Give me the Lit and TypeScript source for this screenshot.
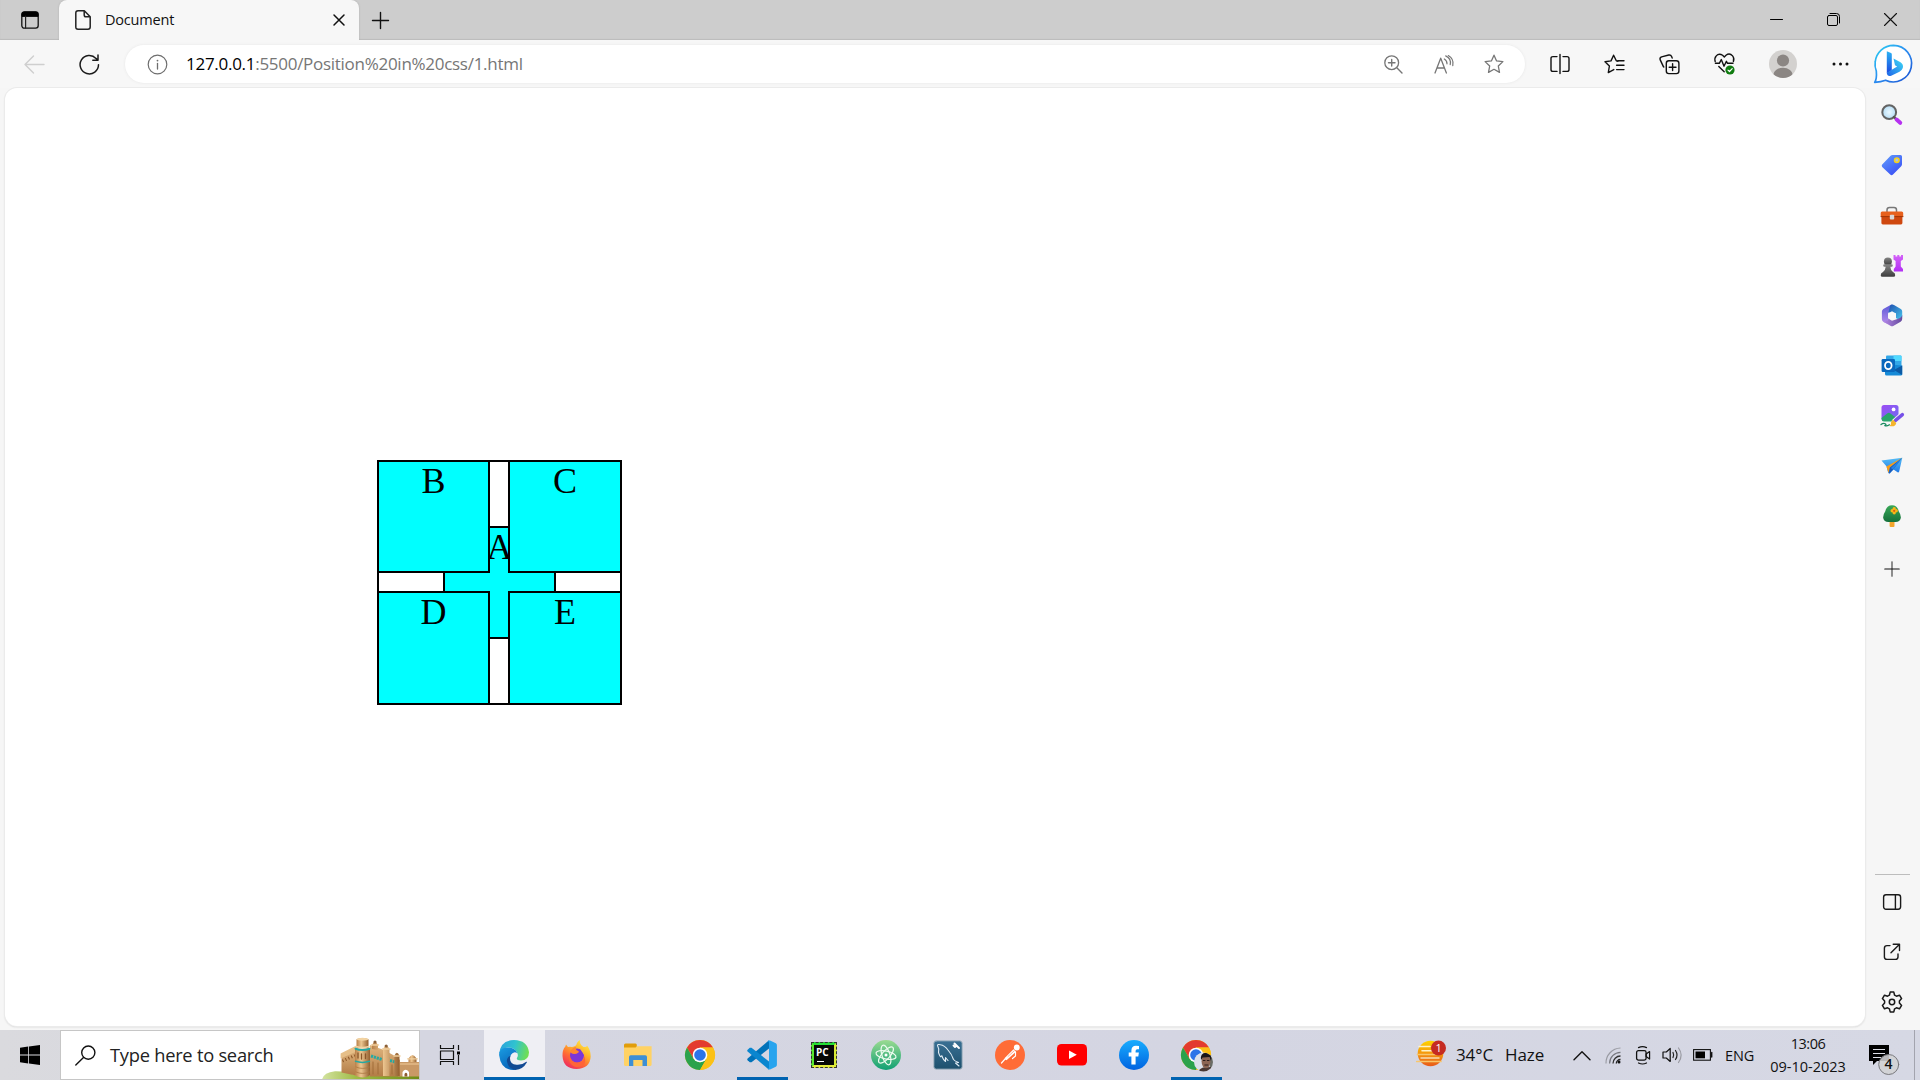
import { LitElement, html, svg, css } from "lit";
import { customElement } from "lit/decorators.js";

const box = (w: number, h: number, body: unknown, vb = `0 0 ${w} ${h}`) =>
  html`<svg width=${w} height=${h} viewBox=${vb} fill="none" stroke-linecap="round" stroke-linejoin="round">${body}</svg>`;

const STAR = "M10 1.2 12.6 6.9 18.9 7.6 14.3 12 15.5 18.4 10 15.3 4.5 18.4 5.7 12 1.1 7.6 7.4 6.9Z";

/* ---------- browser chrome ---------- */
const tabActions = box(18, 18, svg`<rect x=".8" y=".8" width="16.4" height="16.4" rx="2.6" stroke="#111" stroke-width="1.3"/><path d="M1 5V3.2Q1 1 3.2 1H14.8Q17 1 17 3.2V5Z" fill="#000" stroke="#000"/><path d="M4.6 5V17" stroke="#222" stroke-width="1.2"/>`);
const fileIcon = box(16, 20, svg`<path d="M3 .8H9.3L15.2 6.7V17Q15.2 19.2 13 19.2H3Q.8 19.2 .8 17V3Q.8 .8 3 .8ZM9.2 1V5Q9.2 6.8 11 6.8H15" stroke="#222" stroke-width="1.5"/>`);
const tabClose = box(12, 12, svg`<path d="M1 1 11 11M11 1 1 11" stroke="#111" stroke-width="1.5"/>`);
const newTab = box(17, 17, svg`<path d="M8.5.5V16.5M.5 8.5H16.5" stroke="#111" stroke-width="1.4"/>`);
const minIcon = box(13, 13, svg`<path d="M.5 6.5H12.5" stroke="#000" stroke-width="1"/>`);
const maxIcon = box(13, 13, svg`<rect x=".5" y="2.5" width="10" height="10" rx="1.5" stroke="#000"/><path d="M3 .5H9.5Q12.5.5 12.5 3.5V10" stroke="#000"/>`);
const closeIcon = box(13, 13, svg`<path d="M.5.5 12.5 12.5M12.5.5.5 12.5" stroke="#111" stroke-width="1.1"/>`);

const backIcon = box(21, 19, svg`<path d="M20 9.5H1M9.5 1 1 9.5 9.5 18" stroke="#cfcfcf" stroke-width="1.4"/>`);
const reloadIcon = box(21, 21, svg`<path d="M19.5 10.8A9.2 9.2 0 1 1 17 4.4L18.8 6M19 1V6.2H13.8" stroke="#1b1b1b" stroke-width="1.5"/>`);
const infoIcon = box(21, 21, svg`<circle cx="10.5" cy="10.5" r="9.3" stroke="#6e6e6e" stroke-width="1.2"/><path d="M10.5 9.5V15" stroke="#6e6e6e" stroke-width="1.3"/><circle cx="10.5" cy="6.6" r=".9" fill="#6e6e6e"/>`);
const zoomIcon = box(19, 19, svg`<circle cx="7.7" cy="7.7" r="6.9" stroke="#767676" stroke-width="1.3"/><path d="M7.7 4.5V11M4.5 7.7H11M12.8 12.8 18 18" stroke="#767676" stroke-width="1.4"/>`);
const readIcon = box(20, 19, svg`<path d="M1 18 6.7 3.2 12.4 18M3 13H10.4" stroke="#767676" stroke-width="1.3"/><path d="M10.3 4Q13 5.5 13 8.8M11.7.9Q17.5 3.5 16.2 9.6M14.3.6Q20.2 4 18.8 10.6" stroke="#767676" stroke-width="1.2"/>`);
const starIcon = box(20, 20, svg`<path d=${STAR} stroke="#767676" stroke-width="1.3"/>`);
const splitIcon = box(20, 20, svg`<path d="M7 2.6H3Q1 2.6 1 4.6V15.4Q1 17.4 3 17.4H7M13 2.6H17Q19 2.6 19 4.6V15.4Q19 17.4 17 17.4H13M10 .5V19.5" stroke="#111" stroke-width="1.4"/>`);
const favIcon = box(21, 20, svg`<path d="M14 7.2 12.3 6.8 9.6 1.2 7 6.9 1 7.7 5.4 12 4.3 18.6 9.8 15.6M14 6.8H20M12.6 11.2H20M12.6 15.6H20" stroke="#111" stroke-width="1.4"/>`);
const collectIcon = box(21, 21, svg`<rect x="7.3" y="6.8" width="12.6" height="12.8" rx="2.6" stroke="#111" stroke-width="1.4"/><path d="M13.6 9.8V16.6M10.2 13.2H17M4.4 12.6 1.1 5.6Q.6 3.6 2.6 2.9L9.8 1Q11.8.6 12.6 2.5L13.2 4M4.4 12.6 4.8 13" stroke="#111" stroke-width="1.4"/>`);
const heartIcon = box(21, 22, svg`<path d="M1.2 8.5Q.2 5 2.2 2.9Q5-.2 8.6 2.3L10.3 4 12 2.3Q15.6-.4 18.6 2.9Q20.6 5.2 19.4 8.5M1.4 10.3H5.3L7.3 6.6 10 13.2 12.4 8.3 13.5 10.3H19M4.8 13.4 10.2 18.8" stroke="#111" stroke-width="1.4"/><circle cx="16" cy="17" r="4.6" fill="#107c10"/><path d="M14 17.1 15.5 18.5 18.2 15.7" stroke="#fff" stroke-width="1.2"/>`);
const avatarIcon = box(28, 28, svg`<defs><clipPath id="av"><circle cx="14" cy="14" r="14"/></clipPath></defs><g clip-path="url(#av)"><rect width="28" height="28" fill="#d3d1cf"/><circle cx="14" cy="10.5" r="6.1" fill="#8b8683"/><ellipse cx="14" cy="25" rx="9.8" ry="7.2" fill="#8b8683"/></g>`);
const dotsIcon = box(17, 4, svg`<circle cx="2" cy="2" r="1.5" fill="#111"/><circle cx="8.5" cy="2" r="1.5" fill="#111"/><circle cx="15" cy="2" r="1.5" fill="#111"/>`);
const bingIcon = box(40, 40, svg`<defs><linearGradient id="bo" x1="0" y1="0" x2="1" y2="1"><stop offset="0" stop-color="#2bd0f2"/><stop offset=".5" stop-color="#2b8cf0"/><stop offset="1" stop-color="#1a4fd0"/></linearGradient><linearGradient id="bb" x1="0" y1="0" x2="0" y2="1"><stop offset="0" stop-color="#2bb4f4"/><stop offset="1" stop-color="#1a48e0"/></linearGradient><linearGradient id="bc" x1="0" y1="1" x2="1" y2="0"><stop offset="0" stop-color="#1d63e8"/><stop offset="1" stop-color="#3fdcf6"/></linearGradient></defs>
<path d="M20.5 1.3A18.3 18.3 0 1 1 12.6 36.2Q8 37.8 1.7 38.4Q4 35 3.3 27Q1.5 22.5 2.2 18A18.4 18.4 0 0 1 20.5 1.3Z" fill="#fff" stroke="url(#bo)" stroke-width="1.7"/>
<path d="M13.8 7.2 18 9Q18.8 9.4 18.8 10.4V26.2L13.8 29.3Z" fill="url(#bb)"/><path d="M20.5 14.5 27.5 18.2Q30.8 20.3 29.8 24Q29 26.3 26.5 27.7L18.2 31.8Q14.2 33 13.8 28.8L24.2 22.6 22 21.2Z" fill="url(#bc)"/>`);

/* ---------- sidebar ---------- */
const sSearch = box(22, 22, svg`<defs><radialGradient id="lens"><stop offset="0" stop-color="#eaf8ff"/><stop offset="1" stop-color="#b5ddf5"/></radialGradient></defs><circle cx="8.2" cy="8.2" r="6.9" fill="url(#lens)" stroke="#636363" stroke-width="2"/><path d="M13 13 15 15" stroke="#555" stroke-width="2.4"/><path d="M15.6 15.6 19.2 18.8" stroke="#b631f0" stroke-width="4"/>`);
const sTag = box(22, 22, svg`<defs><linearGradient id="tg" x1="0" y1="0" x2=".7" y2="1"><stop offset="0" stop-color="#62a0fb"/><stop offset="1" stop-color="#3a4ff5"/></linearGradient></defs><path d="M11.5 1H19.5Q21 1 21 2.5V10.3Q21 11.5 20.2 12.3L12 20.6Q10.5 21.8 9.2 20.6L1.2 13Q.2 11.7 1.2 10.5L9.6 1.8Q10.4 1 11.5 1Z" fill="url(#tg)"/><circle cx="15.8" cy="6.2" r="2.2" fill="#aac4ea" stroke="#f7d21c" stroke-width="1.7"/>`);
const sBag = box(24, 20, svg`<path d="M7 6V4Q7 1.5 9.5 1.5H14Q16.5 1.5 16.5 4V6" stroke="#777" stroke-width="1.5"/><rect x="1.4" y="6" width="21" height="12.4" rx="1.4" fill="#cf480f"/><path d="M.7 7Q.7 5.5 2.2 5.5H21.6Q23.2 5.5 23.2 7V10.3H.7Z" fill="#e7601c"/><path d="M1 10.6H23" stroke="#a23406"/><rect x="9.8" y="8.7" width="4.4" height="4.8" rx="1" fill="#d8d8d8"/>`);
const sChess = box(24, 24, svg`<defs><linearGradient id="rk" x1="0" y1="0" x2="0" y2="1"><stop offset="0" stop-color="#d463f8"/><stop offset="1" stop-color="#b22ff4"/></linearGradient><linearGradient id="pn" x1="0" y1="0" x2="0" y2="1"><stop offset="0" stop-color="#858585"/><stop offset="1" stop-color="#3d3d3d"/></linearGradient></defs><path d="M13.5 1H15.5V2.5H17.3V1H19.3V2.5H21V1H23V5.5L20.8 7V12.5L23 15V17.5H13.8V15L15.6 12.5V7L13.5 5.5Z" fill="url(#rk)"/><circle cx="7.9" cy="7.4" r="4" fill="url(#pn)"/><path d="M3.2 11.5Q3.2 10.3 4.4 10.3H11.6Q12.8 10.3 12.8 11.5T11.4 12.7H10.3Q10.5 16 13 18Q15.4 19 15.2 21.2Q15.2 22.8 13.5 22.8H2.4Q.8 22.8.7 21.2Q.6 19 3 18Q5.4 16 5.7 12.7H4.6Q3.2 12.7 3.2 11.5Z" fill="url(#pn)"/>`);
const s365 = box(22, 23, svg`<defs><linearGradient id="m1" x1="0" y1="0" x2="0" y2="1"><stop offset="0" stop-color="#5b59d8"/><stop offset="1" stop-color="#b48bea"/></linearGradient><linearGradient id="m2" x1="0" y1="0" x2="1" y2="1"><stop offset="0" stop-color="#1d4fae"/><stop offset="1" stop-color="#48c8ee"/></linearGradient><linearGradient id="m3" x1="0" y1="0" x2="1" y2="0"><stop offset="0" stop-color="#b487e6"/><stop offset="1" stop-color="#654a9e"/></linearGradient></defs><path d="M10 .8 2.3 5Q.9 6 .9 7.6V15.2Q.9 17 2.5 17.9L5.8 19.6 7.4 14V8.6L12.6 5.4 12.8 2.1Q12 .2 10 .8Z" fill="url(#m1)"/><path d="M10 .8Q11.4.1 13 .9L19.8 4.9Q21.2 5.8 21.2 7.6V13.2L19.2 16.3 14.8 13.9V9.2L7.4 8.4 9.3 1.6Z" fill="url(#m2)"/><path d="M2.4 17.7 9.8 22Q11 22.6 12.2 22L19.6 17.8Q21.2 16.8 21.2 15V10.8Q20.7 13.7 17.2 14.8L11 16.8 7.4 14.6Q7 17.4 2.4 17.7Z" fill="url(#m3)"/><path d="M11 7.3 15 9.6V13.8L11 16.200 7 13.800V9.600Z" fill="#f8f8f8"/>`);
const sOutlook = box(22, 21, svg`<rect x="5" y=".5" width="15.5" height="12" rx="1" fill="#33a7e8"/><path d="M12.5.5H19.5Q20.5.5 20.5 1.5V6H12.5Z" fill="#50d9ff"/><path d="M4 9 21.2 10.5V19Q21.2 20.5 19.7 20.5H5.5Q4 20.5 4 19Z" fill="#168ad7"/><path d="M21.2 10.5V20L13 15Z" fill="#0c5aa5"/><rect x=".6" y="4" width="13.4" height="13" rx="1.2" fill="#0a68bd"/><ellipse cx="7.3" cy="10.5" rx="3.3" ry="3.6" stroke="#fff" stroke-width="1.8"/>`);
const sImage = box(25, 24, svg`<defs><linearGradient id="im" x1="0" y1="0" x2="1" y2="1"><stop offset="0" stop-color="#9c4df4"/><stop offset="1" stop-color="#6e6cf0"/></linearGradient></defs><rect x="1.5" y="1" width="17" height="16" rx="2.5" fill="url(#im)"/><circle cx="13.6" cy="5.4" r="1.9" fill="#fff"/><path d="M1.5 14 7.5 9.2Q9 8.3 10.4 9.4L18.5 15.5Q18 17.6 16 17.6H4Q1.5 17.3 1.5 14.5Z" fill="#28a56c"/><path d="M22.5 10.6 14.6 17.3" stroke="#f5f5f5" stroke-width="5.5"/><path d="M22.4 10.6 15.5 16.4" stroke="#7650e8" stroke-width="3.4"/><path d="M13.2 15.8 16.2 18.9Q15.5 23.5 9.2 22Q11.8 20.5 11 18.5Q11.4 16.2 13.2 15.8Z" fill="#f5b52c"/><path d="M1 20.5Q3.5 18.6 5.2 19.7T4.8 21.6Q7 22.4 9.4 20.8" stroke="#1a8a60" stroke-width="1.3"/>`);
const sPlane = box(22, 18, svg`<defs><linearGradient id="pl" x1="0" y1="0" x2="0" y2="1"><stop offset="0" stop-color="#55bdf6"/><stop offset="1" stop-color="#1d75e4"/></linearGradient></defs><path d="M.5 3.5 21.3.7 18.2 14.6Q17.8 15.8 16.6 15.2L12.5 12.6 9 16.3Q7.8 17 7.2 15.8L5.6 9.5Z" fill="url(#pl)"/><path d="M21.3.7 5.4 9.4 7.5 16 8.9 10.4Z" fill="#f79c16"/><path d="M20.8 1 8.9 10.4 8 16.7 12.2 12.6Z" fill="#1a5bb8"/><path d="M21.3.8 12 12.5 9.8 10.9Z" fill="#2682e6"/>`);
const sTree = box(20, 24, svg`<defs><linearGradient id="tr" x1="0" y1="0" x2="0" y2="1"><stop offset="0" stop-color="#39a957"/><stop offset="1" stop-color="#15703b"/></linearGradient></defs><rect x="7.6" y="15" width="4.9" height="8" rx="1" fill="#f3a52c"/><path d="M10 1.2Q15.5 1.2 16.7 7.3Q19.2 11 18.8 14Q18 18 13.5 18H6.4Q2 18 1.2 14Q.8 11 3.3 7.3Q4.6 1.2 10 1.2Z" fill="url(#tr)"/><g fill="#f9b618"><circle cx="12.2" cy="4.8" r="1.7"/><circle cx="12.2" cy="8.8" r="1.7"/><circle cx="10.2" cy="6.8" r="1.7"/><circle cx="14.2" cy="6.8" r="1.7"/></g><circle cx="12.2" cy="6.8" r="1.1" fill="#dc5b12"/>`);
const sPlus = box(16, 16, svg`<path d="M8 .8V15.2" stroke="#555" stroke-width="1.3"/><path d="M.8 8H15.2" stroke="#111" stroke-width="1.2"/>`);
const sPanel = box(20, 18, svg`<rect x="1.6" y="1.8" width="17" height="14.4" rx="2.4" stroke="#1a1a1a" stroke-width="1.4"/><path d="M13.4 2V16" stroke="#1a1a1a" stroke-width="1.4"/>`);
const sOpen = box(18, 18, svg`<path d="M7 2.6H4Q1.4 2.6 1.4 5.2V14Q1.4 16.4 4 16.4H12.4Q15 16.4 15 14V11M10.2 1.3H16.5V7.6M16.3 1.5 8 9.8" stroke="#1a1a1a" stroke-width="1.4"/>`);
const sGear = box(22, 22, svg`<circle cx="11" cy="11" r="2.7" stroke="#1a1a1a" stroke-width="1.5"/><path d="M9.2 1.1H12.8L13.6 4.2 15.4 5.2 18.5 4.2 20.6 7.6 18.4 10V12L20.6 14.4 18.5 17.8 15.4 16.8 13.6 17.8 12.8 20.9H9.2L8.4 17.8 6.6 16.8 3.5 17.8 1.4 14.4 3.6 12V10L1.4 7.6 3.5 4.2 6.6 5.2 8.4 4.2Z" stroke="#1a1a1a" stroke-width="1.5"/>`);

/* ---------- taskbar ---------- */
const winLogo = box(20, 20, svg`<path d="M0 2.8 8.2 1.6V9.6H0ZM9 1.5 20 0V9.6H9ZM0 10.4H8.2V18.5L0 17.3ZM9 10.4H20V20L9 18.6Z" fill="#000"/>`);
const tSearch = box(21, 21, svg`<circle cx="13.3" cy="7.6" r="6.6" stroke="#111" stroke-width="1.4"/><path d="M8.5 12.5.8 20" stroke="#111" stroke-width="1.4"/>`);
const castle = box(97, 43, svg`<defs><linearGradient id="ch" x1="0" y1="0" x2="1" y2="0"><stop offset="0" stop-color="#d3e3a0"/><stop offset=".35" stop-color="#9fbb45"/><stop offset="1" stop-color="#6e8c16"/></linearGradient><linearGradient id="cs" x1="0" y1="0" x2="1" y2="0"><stop offset="0" stop-color="#b98048"/><stop offset=".4" stop-color="#edc690"/><stop offset="1" stop-color="#94602f"/></linearGradient><linearGradient id="cw" x1="0" y1="0" x2="0" y2="1"><stop offset="0" stop-color="#dfb57f"/><stop offset="1" stop-color="#b37c46"/></linearGradient></defs>
<path d="M0 43Q1 35.500 13 34.200Q24 34 34 38.500L97 38.500V43Z" fill="url(#ch)"/>
<path d="M76 25H97V39.500H76Z" fill="#c99966"/><path d="M77 27H97" stroke="#e3bb88" stroke-width="1.500"/><path d="M86.500 25V21.500Q90.500 14.500 94.500 21.500V25Z" fill="url(#cs)"/><path d="M85.500 21.800H95.500" stroke="#f0cf9f" stroke-width="1.200"/>
<path d="M48 8 62 13 73 19 78 23V39.500H48Z" fill="url(#cw)"/>
<path d="M19.500 19 34 11V38.500L19.500 35.500Z" fill="url(#cw)"/><path d="M18.600 16.500 34.500 8.500V14.500L18.600 21.500Z" fill="#e6bf88"/>
<path d="M20.500 24 33 18.500" stroke="#8d5828" stroke-width="3" stroke-dasharray="1.100 2.100" stroke-linecap="butt"/>
<path d="M33 12H48V38.500Q41 42.500 33 38.500Z" fill="url(#cs)"/><path d="M34.500 2.300Q40.500-.500 46.500 2.300V11.500H34.500Z" fill="url(#cs)"/><ellipse cx="40.500" cy="2.300" rx="6" ry="1.500" fill="#f2d3a2"/><path d="M34 9.500Q40.500 11.500 47 9.500" stroke="#f2d3a2" stroke-width="1.500"/>
<path d="M33.500 11.700Q40.500 14.500 47.500 11.700" stroke="#25a9a3" stroke-width="2"/><path d="M33.500 24.300Q40.500 26.500 47.500 24.300" stroke="#25a9a3" stroke-width="1.500"/><path d="M49 19 60 22.500M68 23.500 73 25" stroke="#25a9a3" stroke-width="3" stroke-dasharray="2.200 .800" stroke-linecap="butt"/><path d="M62 12.500H67M62 21H67" stroke="#4fb0a5" stroke-width="1.100"/>
<path d="M36 16V21M39.500 17V22M43.500 17V21.500" stroke="#8a572a" stroke-width="1.300"/><path d="M34 30Q40.500 33 47.500 30M34 35Q40.500 38 47.500 35" stroke="#ac7740" stroke-width=".8"/>
<path d="M50 12V8Q53 2 56 8V13ZM61 39V12Q64 5 67.500 12V39ZM72.300 39V19Q74.800 12.500 77.500 19V39Z" fill="url(#cs)"/><path d="M60.500 12H68M72 19H78M49.500 8H56.500" stroke="#f0cd9c" stroke-width="1.500"/><circle cx="53" cy="5" r="1.600" fill="#8b6038"/><circle cx="64.200" cy="9" r="1.600" fill="#8b6038"/>
<path d="M51 25V37M56 26V37M70 28V37" stroke="#a06c39"/>
<path d="M80.500 39.500V35Q83.500 30.500 87 35V39.500Z" fill="#fff"/><path d="M82.500 39.500V37Q84 34.500 85.300 37V39.500Z" fill="#8e5b31"/>`);
const taskView = box(20, 20, svg`<path d="M.5 0V3.500H13.500V0M.5 20V16.500H13.500V20M.5 6V14.500H13.500V6ZM18.500 0V5M18.500 10V20" stroke="#111" stroke-width="1.200" stroke-linecap="butt"/><path d="M17 6.500H20V9.500H17Z" fill="#000"/>`);
const edgeIcon = box(30, 30, svg`<defs><linearGradient id="e1" x1="0" y1=".3" x2="1" y2=".5"><stop offset="0" stop-color="#2ba3dc"/><stop offset=".5" stop-color="#30c3cf"/><stop offset="1" stop-color="#70df50"/></linearGradient><linearGradient id="e2" x1="0" y1="0" x2=".5" y2="1"><stop offset="0" stop-color="#1b9de2"/><stop offset="1" stop-color="#0764b9"/></linearGradient></defs>
<path d="M.3 14Q1 .2 15 0Q28.500.3 30 12.300Q29.800 20.500 22 20.500Q17.500 20.500 17.800 18.300Q19.500 16 18.500 13.500Q16 7.500 8.800 7.600Q3.500 8 .3 14Z" fill="url(#e1)"/>
<path d="M.1 15Q0 8 8.500 7.600Q15.800 7.500 18.300 13Q14.500 10.800 12 14.800Q9.500 19 12.300 25Q14 28.700 17 29.800Q2 31.500.1 15Z" fill="url(#e2)"/>
<path d="M11.400 15.800Q9.500 24 17.500 24.800Q23 25.300 27.300 21.800Q28.200 21.500 27.800 22.600Q24 29.500 16.500 30Q9 28.500 7.800 21Q8 17 11.400 15.800Z" fill="#124a93"/>`);
const firefoxIcon = box(29, 30, svg`<defs><linearGradient id="f1" x1=".8" y1="0" x2=".2" y2="1"><stop offset="0" stop-color="#fff04a"/><stop offset=".35" stop-color="#ffb52a"/><stop offset=".65" stop-color="#ff6a35"/><stop offset="1" stop-color="#ed2464"/></linearGradient></defs><path d="M18 0Q17 4 21.500 7Q25 7 25 5.500Q28.700 10 28.700 16.500Q28 28.600 14.500 29Q1.300 28.800.5 16Q.3 10 3.300 6.600L4 4.500 6 7Q8 6.300 10 7Q14.500 6.500 15 3Q16 1 18 0Z" fill="url(#f1)"/><circle cx="15" cy="15.500" r="7" fill="#7c36d8"/><path d="M8.500 12.500Q12.500 15.500 16.500 12.500Q17.500 11 15 10.500Q13 9 14.500 6.800Q9.500 7.500 8.500 12.500Z" fill="#ff8730"/><path d="M7 13Q8 22 15 22.800Q22 22.500 22.200 16Q26 27 14.500 27Q5.500 25.500 7 13Z" fill="#ff6437"/><path d="M20 8.500Q22.500 11 22.200 15L18.500 9.500Z" fill="#ffbd35"/>`);
const folderIcon = box(28, 24, svg`<path d="M0 2Q0 .4 1.500.4H11.500Q12.800.6 12.800 2V5H0Z" fill="#e19d0b"/><path d="M0 4.600H11.500L13 3.200H27.600V21.500Q27.600 23 26 23H1.500Q0 23 0 21.500Z" fill="#ffd264"/><path d="M5 23V14Q5 12.300 6.700 12.300H21.300Q23 12.300 23 14V23H18.500V17H9.300V23Z" fill="#3d8fd5"/>`);
const chromeBody = svg`<circle cx="15" cy="15" r="15" fill="#fbc116"/><path d="M2 7.500A15 15 0 0 1 28 7.500H15L8.500 18.700Z" fill="#e33b2e"/><path d="M2 7.500A15 15 0 0 0 15 30L21.500 18.700 15 22.500 8.500 18.700Z" fill="#2ba24c"/><path d="M15 7.500H28A15 15 0 0 1 15 30L21.500 18.700Z" fill="#fbc116"/><circle cx="15" cy="15" r="7.300" fill="#fff"/><circle cx="15" cy="15" r="5.800" fill="#2c74e8"/>`;
const chromeIcon = box(30, 30, chromeBody);
const codeIcon = box(30, 30, svg`<path d="M22 .3V8.500L4.500 22.300 2.800 22.200.6 20.200Q-.2 19.300.6 18.500Z" fill="#0072b9"/><path d="M22 29.700V21.500L4.500 7.700 2.800 7.800.6 9.800Q-.2 10.700.6 11.500Z" fill="#0a86cf"/><path d="M20.500 1.200Q21.500 0 23 .6L28.800 3.200Q29.900 3.900 29.900 5.200V24.800Q29.900 26.100 28.800 26.800L23 29.400Q21.500 30 20.500 28.800Q22 29 22 27.500V2.500Q22 1 20.500 1.200Z" fill="#28a4ee"/>`);
const pycharmIcon = html`<span class="pc"><b>PC</b><i></i></span>`;
const atomIcon = box(30, 30, svg`<defs><linearGradient id="at" x1="0" y1="0" x2="0" y2="1"><stop offset="0" stop-color="#9bdb91"/><stop offset="1" stop-color="#10a073"/></linearGradient></defs><circle cx="15" cy="15" r="15" fill="url(#at)"/><g stroke="#eefbef" stroke-width="1.200"><ellipse cx="15" cy="15" rx="10.200" ry="4" transform="rotate(12 15 15)"/><ellipse cx="15" cy="15" rx="10.200" ry="4" transform="rotate(72 15 15)"/><ellipse cx="15" cy="15" rx="10.200" ry="4" transform="rotate(132 15 15)"/></g><circle cx="15" cy="15" r="1.500" fill="#fff"/>`);
const mysqlIcon = box(30, 30, svg`<defs><linearGradient id="my" x1="0" y1="0" x2="0" y2="1"><stop offset="0" stop-color="#397094"/><stop offset="1" stop-color="#1d506d"/></linearGradient></defs><rect x=".8" y=".8" width="28.400" height="28.400" rx="2.500" fill="url(#my)" stroke="#aab9c6" stroke-width="1"/><path d="M5.500 12.500Q6.500 9 4.500 5.500Q4.500 4 7.500 4.800Q11.500 5.500 15 10Q19 14.500 20.500 19.500Q21.500 21 25.500 22.500L22.500 23 26 26M5.500 12.500Q7 17 8 16.800Q9 14.500 9.500 17.500Q10.500 20 12.500 21.500V17.500L15 20.500" stroke="#e2edf5" stroke-width="1.100"/><path d="M21.500 3.500 23.500 5.500 22 7 20.500 5.500M23.500 5.500 26 8" stroke="#fff" stroke-width="1.900"/>`);
const postmanIcon = box(30, 30, svg`<circle cx="15" cy="15" r="15" fill="#ff6c37"/><circle cx="21.800" cy="7.500" r="2.900" fill="#fff"/><path d="M18.500 9.300 21 11.800 11.500 20.300 9.800 19.300 10 17.800Z" fill="#fff"/><path d="M10.500 18.500 6.500 23M20.500 12V16L17.500 18.500M21.500 7 22.500 6" stroke="#fff" stroke-width="1.200"/><path d="M13 16.500 19 11" stroke="#ff9c79" stroke-width=".8"/>`);
const youtubeIcon = box(30, 22, svg`<rect width="30" height="21.500" rx="4.500" fill="#f00"/><path d="M12 6.500 19.800 10.750 12 15Z" fill="#fff"/>`);
const facebookIcon = box(30, 30, svg`<defs><linearGradient id="fb" x1="0" y1="0" x2="0" y2="1"><stop offset="0" stop-color="#18acfe"/><stop offset="1" stop-color="#0163e0"/></linearGradient></defs><circle cx="15" cy="15" r="15" fill="url(#fb)"/><path d="M12.400 24.500V16.600H9.700V12.600H12.400V10.500Q12.400 5.700 17 5.700Q18.900 5.700 20 6V9.300H18.200Q16.600 9.300 16.600 11V12.600H19.900L19.300 16.600H16.600V24.500Z" fill="#fff"/>`);
const chromeUser = box(34, 34, svg`${chromeBody}<defs><clipPath id="us"><circle cx="22.500" cy="22" r="9.500"/></clipPath></defs><g clip-path="url(#us)"><rect x="13" y="12" width="20" height="20" fill="#dce1ea"/><path d="M28 12H34V33H29Z" fill="#6a6c66"/><path d="M15.500 33Q19 28.500 22 27.500L30 27 33 33Z" fill="#4a3833"/><ellipse cx="25" cy="21.500" rx="4.400" ry="6.800" fill="#8c6553"/><path d="M20 20Q18.800 13 25.200 12.700Q31.500 13.500 30 21L28.500 17 21.800 17.500Z" fill="#1a1719"/><path d="M22.300 20.500H24M26.300 20.500H28M23.800 25H27" stroke="#2b1d1b" stroke-width="1"/></g>`);

/* ---------- tray ---------- */
const hazeIcon = box(31, 27, svg`<defs><linearGradient id="hz" x1="0" y1="0" x2="0" y2="1"><stop offset="0" stop-color="#ffd400"/><stop offset="1" stop-color="#e8591a"/></linearGradient></defs><circle cx="14.500" cy="13.500" r="12.800" fill="url(#hz)"/><path d="M3 6.500H14M6 10.800H19" stroke="#fff2c8" stroke-width="1.600"/><path d="M1.500 14.500H20M.8 21.500H25" stroke="#f8c66c" stroke-width="1.700"/><path d="M5 18H23" stroke="#f6ddb2" stroke-width="1.500"/><circle cx="22.500" cy="8" r="7.500" fill="#c52b22"/>`);
const chevIcon = box(18, 11, svg`<path d="M1 9.800 9 1.800 17 9.800" stroke="#111" stroke-width="1.400"/>`);
const wifiIcon = box(16, 17, svg`<g stroke-linecap="butt"><path d="M1 16.500A15 15 0 0 1 15.500 1" stroke="#9a9ba3" stroke-width="1.200"/><path d="M4.600 16.500A11 11 0 0 1 15.500 5.300" stroke="#77787f" stroke-width="1.200"/><path d="M8 16.500A7.500 7.500 0 0 1 15.500 9" stroke="#333" stroke-width="1.300"/><path d="M11.300 16.500A4 4 0 0 1 15.500 12.500" stroke="#222" stroke-width="1.300"/></g><circle cx="14" cy="15" r="1.500" fill="#111"/>`);
const meetIcon = box(16, 19, svg`<rect x=".6" y="4.6" width="9.500" height="9.500" rx="1.800" stroke="#111" stroke-width="1.300"/><path d="M10.100 8.100 13.600 5.600V13.100L10.100 10.600ZM2.500 1.600Q6.500-.4 10.500 1.600M2.500 17Q6.500 19 10.500 17" stroke="#111" stroke-width="1.200"/>`);
const volIcon = box(21, 18, svg`<path d="M1 6H4.300L8.200 2.500V15.500L4.300 12H1Z" stroke="#111" stroke-width="1.200"/><path d="M11 6.500Q12.300 9 11 11.500M13.500 4.500Q16.500 9 13.500 13.500" stroke="#222" stroke-width="1.200"/><path d="M16.500 2Q21.800 9 16.500 16.500" stroke="#999aa2" stroke-width="1.200"/>`);
const batIcon = box(20, 12, svg`<rect x=".6" y=".6" width="16.800" height="10.600" stroke="#111" stroke-width="1.100" stroke-linejoin="miter"/><rect x="2.500" y="2.500" width="9.500" height="6.800" fill="#000"/><path d="M18.700 3.500V8" stroke="#111" stroke-width="1.400"/>`);
const noteIcon = box(32, 31, svg`<path d="M0 0H20V16H8L4 20V16H0Z" fill="#000"/><path d="M4 4.500H16M4 8.500H16M4 12.500H12" stroke="#dcdde5" stroke-width="1.100" stroke-linecap="butt"/><circle cx="19.700" cy="19.500" r="10" fill="#d2d2d4" fill-opacity=".88" stroke="#77777b" stroke-width="1"/>`);

@customElement("app-root")
export class AppRoot extends LitElement {
  static styles = css`
    :host { display: block; width: 1920px; height: 1080px; overflow: hidden; font-family: "Open Sans", "Noto Sans", sans-serif; color: #111; }
    * { box-sizing: border-box; }
    svg { display: block; flex: none; overflow: visible; }
    .screen { display: grid; grid-template-rows: 40px 48px 942px 50px; height: 1080px; background: #f6f6f6; }
    .slot { display: flex; align-items: center; justify-content: center; flex: none; }

    .tabs { display: flex; background: #cdcdcd; box-shadow: inset 0 -1px 1px #bcbcbc; }
    .tabs > .slot { height: 40px; }
    .w-act { width: 59px; border-radius: 0 0 6px 0; }
    .tab { width: 300px; height: 40px; display: flex; align-items: center; padding: 0 14px 0 16px; background: #f7f7f7; border-radius: 8px 8px 0 0; font-size: 14.5px; letter-spacing: -.2px; box-shadow: 0 0 2px #aaa; clip-path: inset(0 -3px 0 -3px); }
    .tab span { flex: 1; padding: 0 0 1px 14px; line-height: 20px; }
    .w-new { width: 43px; }
    .win { display: flex; margin-left: auto; padding-right: 1px; }
    .win .slot { width: 57px; height: 39px; }

    .bar { display: flex; align-items: center; padding-left: 7px; background: #f7f7f7; }
    .w55 { width: 55px; }
    .w62 { width: 62px; }
    .w52 { width: 52px; }
    .w54 { width: 54px; padding-right: 1px; }
    .addr { width: 1400px; height: 38px; display: flex; align-items: center; margin: 0 7px 0 8px; padding: 0 6px 0 22px; background: #fff; border-radius: 19px; box-shadow: 0 0 3px #e6e6e6; }
    .url { flex: 1; padding-left: 18px; font-size: 17px; letter-spacing: -.28px; line-height: 24px; color: #767676; white-space: nowrap; }
    .url b { font-weight: 400; color: #000; }
    .addr .slot { width: 50.300px; }

    .main { display: flex; }
    .page { width: 1860px; height: 938px; margin-left: 5px; background: #fff; border-radius: 12px; box-shadow: 0 0 0 1px #ebebeb, 0 1px 2px #c8c8c8; padding: 372px 0 0 372px; }
    .side { width: 55px; display: flex; flex-direction: column; padding: 2px 1px 3px 0; align-items: center; }
    .side .slot { width: 54px; height: 50px; }
    .side .slot:nth-child(n+3):nth-child(-n+9) { padding-top: 1px; }
    .side .add { height: 58px; }
    .sep { width: 35px; height: 1px; background: #bdbdbd; margin: auto 0 2px; }

    .figure { position: relative; width: 245px; height: 245px; border: 2px solid #000; display: grid; grid-template: 109px 22px 110px / 109px 22px 110px; font: 36px/39px "Liberation Serif", serif; text-align: center; color: #000; }
    .cell { background: aqua; border: 2px solid #000; z-index: 1; margin: -2px; }
    .a { position: absolute; left: 64px; top: 64px; width: 113px; height: 113px; margin: 0; z-index: 0; }
    .b { grid-area: 1 / 1; }
    .c { grid-area: 1 / 3; }
    .d { grid-area: 3 / 1; }
    .e { grid-area: 3 / 3; }

    .task { display: flex; background: linear-gradient(90deg, #dadade, #d5d6e1 420px, #d4d5e2 1200px, #d6d8e4); }
    .start { width: 60px; }
    .search { width: 360px; display: flex; align-items: center; background: #fff; border: 1px solid #c6c6c6; padding-left: 14px; overflow: hidden; }
    .search span { flex: 1; padding: 0 0 1px 14px; font-size: 18.300px; letter-spacing: -.25px; line-height: 26px; color: #222; white-space: nowrap; }
    .search > svg:last-child { align-self: flex-end; margin-bottom: -1px; }
    .tv { width: 60px; margin-right: 4px; }
    .apps { display: flex; gap: 1px; }
    .app { width: 61px; height: 50px; display: flex; align-items: center; justify-content: center; padding-right: 1px; }
    .active { background: #efeff4; box-shadow: inset 0 -3px #0063b1; }
    .running { background: linear-gradient(#0063b1, #0063b1) center bottom / 51px 3px no-repeat; }
    .user svg { margin: 4px 0 0 4px; }
    .pc { width: 26px; height: 26px; padding: 1px 0 0 3px; background: #060806; border: 3px solid; border-color: #25df35 #d8ea37 #e4ec3a #57e82f; outline: 1px dashed #333; outline-offset: -1px; display: flex; flex-direction: column; align-items: flex-start; }
    .pc b { font: 700 10px/12px "Open Sans", sans-serif; color: #fff; margin-left: -1px; }
    .pc i { width: 7px; height: 1px; background: #fff; margin-top: 3px; }

    .tray { margin-left: auto; display: grid; grid-template-columns: 40px 49px 68px 32px 31px 26px 31px 32px 45px 99px 45px 6px; align-items: center; font-size: 14.500px; white-space: nowrap; }
    .big { font-size: 17px; padding-bottom: 1px; letter-spacing: -.1px; }
    .eng { letter-spacing: -.1px; }
    .clock { width: 76px; text-align: center; line-height: 23px; padding-bottom: 1px; }
    .clock div:first-child { letter-spacing: -.5px; }
    .edge { height: 50px; border-left: 1px solid #a3a4ae; }
    .badge { position: relative; margin-bottom: 4px; }
    .note { margin: 10px 0 0; }
    .num { position: absolute; color: #fff; font-size: 11px; line-height: 14px; left: 19.500px; top: 1px; }
    .num.four { color: #111; font-size: 14px; font-weight: 600; left: 15.500px; top: 12px; }
  `;

  render() {
    const slot = (icon: unknown, cls = "") => html`<div class="slot ${cls}">${icon}</div>`;
    const app = (icon: unknown, cls = "") => html`<div class="app ${cls}">${icon}</div>`;
    return html`
      <div class="screen">
        <header class="tabs">
          ${slot(tabActions, "w-act")}
          <div class="tab">${fileIcon}<span>Document</span>${tabClose}</div>
          ${slot(newTab, "w-new")}
          <div class="win">${[minIcon, maxIcon, closeIcon].map((i) => slot(i))}</div>
        </header>
        <nav class="bar">
          ${slot(backIcon, "w55")}${slot(reloadIcon, "w55")}
          <div class="addr">
            ${infoIcon}
            <div class="url"><b>127.0.0.1</b>:5500/Position%20in%20css/1.html</div>
            ${[zoomIcon, readIcon, starIcon].map((i) => slot(i))}
          </div>
          ${[splitIcon, favIcon, collectIcon, heartIcon].map((i) => slot(i, "w55"))}
          ${slot(avatarIcon, "w62")}${slot(dotsIcon, "w52")}${slot(bingIcon, "w54")}
        </nav>
        <div class="main">
          <main class="page">
            <div class="figure">
              <div class="cell a">A</div>
              <div class="cell b">B</div>
              <div class="cell c">C</div>
              <div class="cell d">D</div>
              <div class="cell e">E</div>
            </div>
          </main>
          <aside class="side">
            ${[sSearch, sTag, sBag, sChess, s365, sOutlook, sImage, sPlane, sTree].map((i) => slot(i))}
            ${slot(sPlus, "add")}
            <div class="sep"></div>
            ${[sPanel, sOpen, sGear].map((i) => slot(i))}
          </aside>
        </div>
        <footer class="task">
          ${slot(winLogo, "start")}
          <div class="search">${tSearch}<span>Type here to search</span>${castle}</div>
          ${slot(taskView, "tv")}
          <div class="apps">
            ${app(edgeIcon, "active")}${app(firefoxIcon)}${app(folderIcon)}${app(chromeIcon)}
            ${app(codeIcon, "running")}${app(pycharmIcon)}${app(atomIcon)}${app(mysqlIcon)}
            ${app(postmanIcon)}${app(youtubeIcon)}${app(facebookIcon)}${app(chromeUser, "running user")}
          </div>
          <div class="tray">
            <div class="badge">${hazeIcon}<span class="num">1</span></div>
            <div class="big">34°C</div>
            <div class="big">Haze</div>
            ${chevIcon}${wifiIcon}${meetIcon}${volIcon}${batIcon}
            <div class="eng">ENG</div>
            <div class="clock"><div>13:06</div><div>09-10-2023</div></div>
            <div class="badge note">${noteIcon}<span class="num four">4</span></div>
            <div class="edge"></div>
          </div>
        </footer>
      </div>`;
  }
}
